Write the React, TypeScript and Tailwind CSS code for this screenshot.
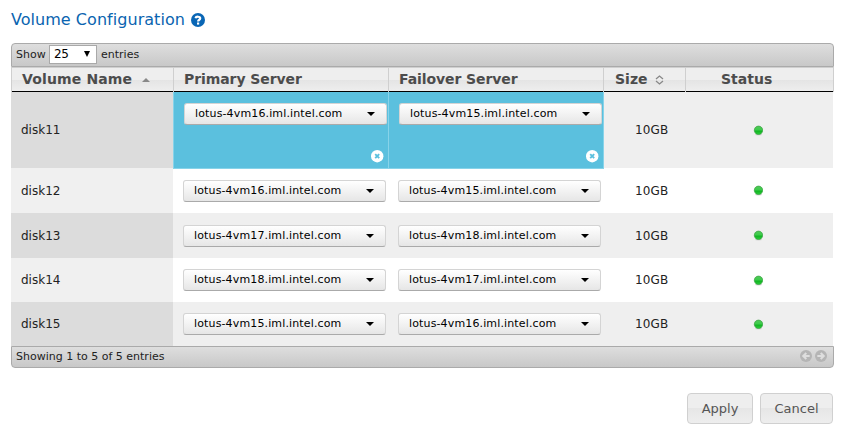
import React from 'react';

type Row = { name: string; primary: string; failover: string; height: string; selected?: boolean };

const rows: Row[] = [
  { name: 'disk11', primary: 'lotus-4vm16.iml.intel.com', failover: 'lotus-4vm15.iml.intel.com', height: 'h-[76px]', selected: true },
  { name: 'disk12', primary: 'lotus-4vm16.iml.intel.com', failover: 'lotus-4vm15.iml.intel.com', height: 'h-[45px]' },
  { name: 'disk13', primary: 'lotus-4vm17.iml.intel.com', failover: 'lotus-4vm18.iml.intel.com', height: 'h-[45px]' },
  { name: 'disk14', primary: 'lotus-4vm18.iml.intel.com', failover: 'lotus-4vm17.iml.intel.com', height: 'h-[44px]' },
  { name: 'disk15', primary: 'lotus-4vm15.iml.intel.com', failover: 'lotus-4vm16.iml.intel.com', height: 'h-[44px]' },
];

const columns = 'grid grid-cols-[162px_215px_215px_82px_148px]';

function ServerSelect({ value }: { value: string }) {
  return (
    <button className="flex h-[22px] w-[203px] shrink-0 items-center justify-between rounded-[3px] border border-[#d4d4d4] border-b-[#aaa] bg-linear-to-b from-white to-[#e6e6e6] pr-[11px] pl-[10px] text-[11px] tracking-[0.14px] text-black">
      <span className="pt-[1px]">{value}</span>
      <svg width="8" height="4" viewBox="0 0 8 4"><path d="M0 0h8L4 4z" fill="#000" /></svg>
    </button>
  );
}

function ServerCell({ value, selected, last }: { value: string; selected?: boolean; last?: boolean }) {
  if (!selected) {
    return <div className="flex items-center pl-[10px]"><ServerSelect value={value} /></div>;
  }
  return (
    <div className={`z-10 flex h-[77px] flex-col items-start border-b border-l border-[#87d3e9] bg-[#5bc0de] pt-[11px] pl-[10px] ${last ? 'w-[216px] border-r' : ''}`}>
      <ServerSelect value={value} />
      <svg className="mt-[25px] ml-[187px]" width="13" height="13" viewBox="0 0 13 13">
        <circle cx="6.2" cy="6.2" r="6.2" fill="#fff" />
        <path d="M4.2 4.2l4 4M8.2 4.2L4.2 8.2" stroke="#5bc0de" strokeWidth="1.9" />
      </svg>
    </div>
  );
}

function HeaderCell({ children, last, pad }: { children: React.ReactNode; last?: boolean; pad: string }) {
  return (
    <div className={`flex h-[25px] items-center border-l border-[#cfcfcf] ${last ? 'w-[149px] border-r' : ''}`}>
      <div className={`flex h-[25px] flex-1 items-center border-t border-b border-t-[#cfcfcf] border-b-black bg-[linear-gradient(#eee_0%,#eee_50%,#e4e4e4_51%,#eee_100%)] ${pad}`}>
        {children}
      </div>
    </div>
  );
}

function StatusDot() {
  return (
    <svg width="10" height="11" viewBox="0 0 10 11">
      <defs>
        <linearGradient id="dot" x1="0" y1="0" x2="0" y2="1">
          <stop offset="0" stopColor="#52c85a" />
          <stop offset=".45" stopColor="#3ccb49" />
          <stop offset=".6" stopColor="#12b524" />
          <stop offset="1" stopColor="#2bcf38" />
        </linearGradient>
      </defs>
      <ellipse cx="5.5" cy="9.6" rx="3.4" ry=".9" fill="#d2d2d2" />
      <circle cx="5.5" cy="5.3" r="4.2" fill="url(#dot)" stroke="#3a9f42" strokeWidth=".7" />
    </svg>
  );
}

function PageArrow({ back }: { back?: boolean }) {
  return (
    <svg className={back ? 'rotate-180' : ''} width="12" height="12" viewBox="0 0 12 12">
      <circle cx="6" cy="6" r="6" fill="#b5b5b5" />
      <path d="M2.3 6h5.7M5.7 3L8.7 6 5.7 9" fill="none" stroke="#dedede" strokeWidth="2.1" />
    </svg>
  );
}

const actionButton =
  'flex h-[31px] items-center justify-center rounded-[4px] border border-[#d0d0d0] bg-[linear-gradient(#eee_0%,#eee_49%,#e6e6e6_50%,#eee_100%)] text-[13px] text-[#555]';

export default function App() {
  return (
    <div className="h-[436px] w-[850px] bg-white pt-[9px] pl-[11px] font-['DejaVu_Sans',sans-serif] text-[12px] whitespace-nowrap text-[#222]">
      <div className="flex h-[21px] items-center gap-[6px] text-[#0a64b0]">
        <h1 className="text-[16px] tracking-[0.04px]">Volume Configuration</h1>
        <svg width="14" height="14" viewBox="0 0 14 14">
          <circle cx="7" cy="7" r="7" fill="#0966b5" />
          <path d="M4.5 5.2C4.9 3.2 9.4 3.2 9.2 5.4C9.1 6.9 7.1 6.6 7.1 8.6" fill="none" stroke="#fff" strokeWidth="2.2" />
          <rect x="6" y="9.5" width="2.2" height="2.1" fill="#fff" />
        </svg>
      </div>

      <div className="mt-[13px] w-[823px]">
        <div className="flex h-[24px] items-center rounded-t-[4px] border border-[#aaa] bg-linear-to-b from-[#dedede] to-[#c8c8c8] pl-[4px] text-[11px]">
          <span className="w-[33px]">Show</span>
          <div className="-mt-[2px] flex h-[19px] w-[48px] items-center justify-between border border-[#a9a9a9] bg-white pr-[6px] pl-[4px] text-[12px] tracking-[-0.3px] text-black">
            <span>25</span>
            <svg width="6" height="6" viewBox="0 0 6 6"><path d="M0 0h6L3 6z" /></svg>
          </div>
          <span className="ml-[4px]">entries</span>
        </div>

        <div className={`${columns} text-[14px] font-bold text-[#4c4c4c]`}>
          <HeaderCell pad="pl-[10px]">
            <span className="tracking-[0.14px]">Volume Name</span>
            <svg className="ml-[10px]" width="8" height="4" viewBox="0 0 8 4"><path d="M0 4h8L4 0z" fill="#888" /></svg>
          </HeaderCell>
          <HeaderCell pad="pl-[10px]"><span className="tracking-[-0.08px]">Primary Server</span></HeaderCell>
          <HeaderCell pad="pl-[10px]"><span className="tracking-[-0.08px]">Failover Server</span></HeaderCell>
          <HeaderCell pad="pl-[11px]">
            Size
            <svg className="ml-[7px]" width="9" height="10" viewBox="0 0 9 10"><path d="M1 4l3.5-3L8 4M1 6l3.5 3L8 6" fill="none" stroke="#888" strokeWidth="1.3" /></svg>
          </HeaderCell>
          <HeaderCell pad="pl-[35px]" last>Status</HeaderCell>
        </div>

        {rows.map((row, i) => (
          <div key={row.name} className={`${columns} ${row.height} w-[822px] ${i % 2 === 0 ? 'bg-[#efefef]' : 'bg-white'}`}>
            <div className={`flex items-center pl-[10px] ${row.selected ? 'pb-[2px]' : ''} ${i % 2 === 0 ? 'bg-[#dcdcdc]' : 'bg-[#f0f0f0]'}`}>{row.name}</div>
            <ServerCell value={row.primary} selected={row.selected} />
            <ServerCell value={row.failover} selected={row.selected} last />
            <div className={`flex items-center pl-[32px] tracking-[0.15px] ${row.selected ? 'pb-[2px]' : ''}`}>10GB</div>
            <div className={`flex items-center pl-[68px] ${row.selected ? 'pb-[1px]' : ''}`}><StatusDot /></div>
          </div>
        ))}

        <div className="flex h-[22px] items-center justify-between rounded-b-[4px] border border-[#aaa] bg-linear-to-b from-[#dedede] to-[#c8c8c8] pr-[6px] pl-[4px] text-[11px]">
          <span>Showing 1 to 5 of 5 entries</span>
          <div className="flex gap-[3px] pb-[2px]">
            <PageArrow back />
            <PageArrow />
          </div>
        </div>

        <div className="mt-[25px] flex justify-end gap-[7px] pr-[1px]">
          <button className={`${actionButton} w-[66px]`}>Apply</button>
          <button className={`${actionButton} w-[73px]`}>Cancel</button>
        </div>
      </div>
    </div>
  );
}
